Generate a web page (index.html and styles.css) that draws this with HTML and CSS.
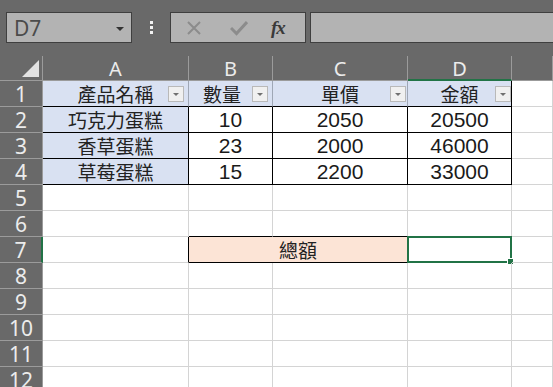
FILE: index.html
```html
<!DOCTYPE html>
<html>
<head>
    <title>Sheet1</title>
    <meta charset="utf-8">
    <link rel="stylesheet" href="styles.css">
</head>
<body>
    <div class="formula-bar">
        <div class="name-box">
            <span>D7</span>
            <span class="caret"></span>
        </div>
        <div class="grip"><i></i><i></i><i></i></div>
        <div class="fx-buttons">
            <svg class="btn-cancel" width="16" height="16" viewBox="0 0 16 16">
                <path d="M2 2 L14 14 M14 2 L2 14" stroke="#8c8c8c" stroke-width="2" fill="none"/>
            </svg>
            <svg class="btn-enter" width="18" height="16" viewBox="0 0 18 16">
                <path d="M1 8 L6.5 13.5 L17 2" stroke="#8c8c8c" stroke-width="3" fill="none"/>
            </svg>
            <span class="fx">fx</span>
        </div>
        <div class="formula-input"></div>
    </div>

    <div class="sheet">
        <!-- column headers -->
        <div class="corner"><span class="tri"></span></div>
        <div class="col-hd">A</div>
        <div class="col-hd">B</div>
        <div class="col-hd">C</div>
        <div class="col-hd active">D</div>
        <div class="col-hd"></div>

        <!-- 1 -->
        <div class="row-hd">1</div>
        <div class="cell th cjk">產品名稱<span class="filter"></span></div>
        <div class="cell th cjk th-b">數量<span class="filter"></span></div>
        <div class="cell th cjk th-c">單價<span class="filter"></span></div>
        <div class="cell th cjk th-d">金額<span class="filter"></span></div>
        <div class="cell"></div>

        <!-- 2 -->
        <div class="row-hd">2</div>
        <div class="cell td name cjk">巧克力蛋糕</div>
        <div class="cell td num">10</div>
        <div class="cell td num">2050</div>
        <div class="cell td num">20500</div>
        <div class="cell"></div>

        <!-- 3 -->
        <div class="row-hd">3</div>
        <div class="cell td name cjk">香草蛋糕</div>
        <div class="cell td num">23</div>
        <div class="cell td num">2000</div>
        <div class="cell td num">46000</div>
        <div class="cell"></div>

        <!-- 4 -->
        <div class="row-hd">4</div>
        <div class="cell td name cjk">草莓蛋糕</div>
        <div class="cell td num">15</div>
        <div class="cell td num">2200</div>
        <div class="cell td num">33000</div>
        <div class="cell"></div>

        <!-- 5 -->
        <div class="row-hd">5</div>
        <div class="cell"></div><div class="cell"></div><div class="cell"></div><div class="cell"></div><div class="cell"></div>

        <!-- 6 -->
        <div class="row-hd">6</div>
        <div class="cell"></div>
        <div class="cell above-total"></div>
        <div class="cell above-total"></div>
        <div class="cell"></div>
        <div class="cell"></div>

        <!-- 7 -->
        <div class="row-hd active">7</div>
        <div class="cell before-total"></div>
        <div class="cell total cjk">總額</div>
        <div class="cell selected"><span class="handle"></span></div>
        <div class="cell"></div>

        <!-- 8..12 -->
        <div class="row-hd">8</div>
        <div class="cell"></div><div class="cell"></div><div class="cell"></div><div class="cell"></div><div class="cell"></div>
        <div class="row-hd">9</div>
        <div class="cell"></div><div class="cell"></div><div class="cell"></div><div class="cell"></div><div class="cell"></div>
        <div class="row-hd">10</div>
        <div class="cell"></div><div class="cell"></div><div class="cell"></div><div class="cell"></div><div class="cell"></div>
        <div class="row-hd">11</div>
        <div class="cell"></div><div class="cell"></div><div class="cell"></div><div class="cell"></div><div class="cell"></div>
        <div class="row-hd">12</div>
        <div class="cell"></div><div class="cell"></div><div class="cell"></div><div class="cell"></div><div class="cell"></div>
    </div>
</body>
</html>
```

FILE: styles.css
```css
:root {
    --chrome: #696969;
    --chrome-line: #9b9b9b;
    --box: #b3b3b3;
    --box-line: #3f3f3f;
    --grid: #d4d4d4;
    --blue: #d9e1f2;
    --peach: #fce4d6;
    --green: #217346;
}

body {
    margin: 0;
    width: 553px;
    height: 387px;
    overflow: hidden;
    background: white;
    font-family: "Noto Sans", "Liberation Sans", sans-serif;
}

/* formula bar */

.formula-bar {
    height: 56px;
    background: var(--chrome);
    display: flex;
    align-items: flex-start;
    padding-top: 12px;
    box-sizing: border-box;
    padding-left: 6px;
}

.name-box,
.fx-buttons,
.formula-input {
    height: 31px;
    box-sizing: border-box;
    background: var(--box);
    border: 1px solid var(--box-line);
}

.name-box {
    width: 126px;
    display: flex;
    align-items: center;
    justify-content: space-between;
    padding: 0 7px 0 7px;
    font-size: 21px;
    color: #4b4b4b;
}

.caret {
    width: 0;
    height: 0;
    border-left: 4px solid transparent;
    border-right: 4px solid transparent;
    border-top: 4px solid #333;
    margin-top: 2px;
}

.grip {
    width: 38px;
    height: 31px;
    display: flex;
    flex-direction: column;
    align-items: center;
    justify-content: center;
    gap: 2px;
}

.grip i {
    display: block;
    width: 3px;
    height: 3px;
    background: #f2f2f2;
}

.fx-buttons {
    width: 136px;
    display: flex;
    align-items: center;
    padding-left: 15px;
}

.btn-enter {
    margin-left: 28px;
}

.fx {
    margin-left: 23px;
    font-family: "Liberation Serif", "DejaVu Serif", serif;
    font-style: italic;
    font-weight: bold;
    font-size: 19px;
    color: #3a3a3a;
    letter-spacing: -1px;
}

.formula-input {
    flex: 1;
    margin-left: 4px;
    margin-right: -4px;
}

/* sheet grid */

.sheet {
    display: grid;
    grid-template-columns: 43px 146px 84px 135px 104px 1fr;
    grid-template-rows: 25px;
    grid-auto-rows: 26px;
}

.corner,
.col-hd,
.row-hd {
    background: var(--chrome);
    color: #ececec;
    box-sizing: border-box;
    font-size: 20px;
    display: flex;
    align-items: center;
    justify-content: center;
}

.corner {
    border-right: 1px solid var(--chrome-line);
    border-bottom: 1px solid var(--chrome-line);
    position: relative;
}

.tri {
    position: absolute;
    right: 3px;
    bottom: 3px;
    width: 0;
    height: 0;
    border-left: 17px solid transparent;
    border-bottom: 17px solid #e2e2e2;
}

.col-hd {
    border-right: 1px solid var(--chrome-line);
    border-bottom: 1px solid var(--chrome-line);
    padding-top: 1px;
}

.col-hd.active {
    border-bottom: 2px solid var(--green);
}

.row-hd {
    border-right: 1px solid var(--chrome-line);
    border-bottom: 1px solid var(--chrome-line);
    font-size: 21px;
}

.row-hd.active {
    border-right: 2px solid var(--green);
}

.cell {
    box-sizing: border-box;
    border-right: 1px solid var(--grid);
    border-bottom: 1px solid var(--grid);
    display: flex;
    align-items: center;
    justify-content: center;
    color: #1a1a1a;
    position: relative;
}

.cjk {
    font-family: "Noto Sans CJK TC", "Noto Sans", sans-serif;
    font-size: 19px;
    line-height: 1;
    color: #222;
}

.num {
    font-family: "Liberation Sans", Arial, sans-serif;
    font-size: 21px;
}

.th {
    background: var(--blue);
    border-right-color: #9fa7b5;
    border-bottom: 1px solid #000;
}

.th-b {
    justify-content: flex-start;
    padding-left: 14px;
}

.th-d {
    border-right: 1px solid #000;
}

.filter {
    position: absolute;
    right: 4px;
    top: 5px;
    width: 16px;
    height: 16px;
    box-sizing: border-box;
    background: #f0f0f0;
    border: 1px solid #b9b9b9;
}

.th-c .filter { right: 1px; }
.th-d .filter { right: 0; }

.filter::after {
    content: "";
    position: absolute;
    left: 4px;
    top: 6px;
    border-left: 3px solid transparent;
    border-right: 3px solid transparent;
    border-top: 3px solid #707070;
}

.td {
    border-right: 1px solid #000;
    border-bottom: 1px solid #000;
}

.name {
    background: var(--blue);
}

.above-total {
    border-bottom: 1px solid #000;
}

.before-total {
    border-right: 1px solid #000;
}

.total {
    grid-column: span 2;
    background: var(--peach);
    border-right: 1px solid #000;
    border-bottom: 1px solid #000;
}

.selected::before {
    content: "";
    position: absolute;
    left: -1px;
    top: -1px;
    right: -1px;
    bottom: -1px;
    border: 2px solid var(--green);
}

.handle {
    position: absolute;
    right: -3px;
    bottom: -3px;
    width: 5px;
    height: 5px;
    background: var(--green);
    border: 1px solid white;
}
```
